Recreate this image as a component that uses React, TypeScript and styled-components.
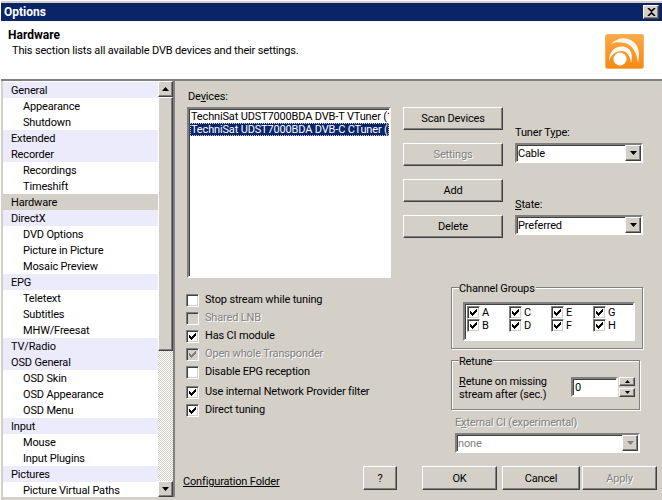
import React from "react";
import styled, { createGlobalStyle } from "styled-components";

const Global = createGlobalStyle`
  html, body { margin: 0; padding: 0; background: #d4d0c8; }
  * { box-sizing: border-box; }
  body { font-family: Roboto, "Liberation Sans", Arial, sans-serif; font-size: 11px; letter-spacing: -0.16px; color: #000; }
`;
const raised = `border: 1px solid; border-color: #fff #404040 #404040 #fff; box-shadow: inset -1px -1px 0 #808080;`;
const sunken = `border: 2px solid; border-color: #808080 #fff #fff #808080; box-shadow: inset 1px 1px 0 #404040;`;

const Window = styled.div`
  width: 662px; height: 500px; overflow: hidden; background: #d4d0c8;
  padding-top: 3px; display: flex; flex-direction: column; border-left: 1px solid #fff; border-top: 1px solid #fff;
`;
const TitleBar = styled.div`
  height: 18px; margin-top: -1px; background: #0a246a; color: #fff; font-weight: 700; font-size: 12px; letter-spacing: 0;
  display: flex; align-items: center; justify-content: space-between; padding: 0 3px 0 3px;
`;
const CloseBtn = styled.div`
  width: 16px; height: 14px; background: #d4d0c8; ${raised} display: flex; align-items: center; justify-content: center;
`;
const Header = styled.div`
  height: 60px; background: #fff; border-bottom: 2px solid #808080; display: flex; justify-content: space-between; padding: 7px 18px 0 7px;
`;
const HeaderText = styled.div`
  display: flex; flex-direction: column; gap: 1px;
`;
const HeaderTitle = styled.div`font-weight: 700; font-size: 12px; letter-spacing: 0; line-height: 15px;`;
const HeaderSub = styled.div`padding-left: 4px; line-height: 14px;`;
const Logo = styled.svg`width: 39px; height: 35px; margin-top: 6px;`;
const Body = styled.div`flex: 1; display: flex; min-height: 0;`;
const Side = styled.div`
  width: 172px; margin-left: 2px; display: flex; background: #fff; border-right: 2px solid #808080; height: 416px; margin-bottom: 2px; flex: none;
`;
const Tree = styled.div`flex: 1; padding-top: 1px; overflow: hidden;`;
const TreeRow = styled.div<{ $top?: boolean; $sel?: boolean }>`
  height: 16px; line-height: 18px; white-space: nowrap;
  padding-left: ${(p) => (p.$top ? 8 : 20)}px;
  background: ${(p) => (p.$sel ? "#d4d0c8" : p.$top ? "#ecebfb" : "#fff")};
`;
const Scroll = styled.div`
  width: 15px; flex: none; display: flex; flex-direction: column;
  background-color: #fff;
  background-image: conic-gradient(#d4d0c8 25%, #fff 0 50%, #d4d0c8 0 75%, #fff 0);
  background-size: 2px 2px;
`;
const ScrollBtn = styled.div`
  height: 16px; background: #d4d0c8; ${raised} display: flex; align-items: center; justify-content: center; flex: none;
`;
const Thumb = styled.div`height: 254px; background: #d4d0c8; ${raised} flex: none;`;
const ScrollGap = styled.div`flex: 1;`;
const Panel = styled.div`
  flex: 1; display: flex; flex-direction: column; padding: 9px 5px 0 12px; min-width: 0;
`;
const TopRow = styled.div`display: flex; height: 190px;`;
const DevCol = styled.div`width: 204px; display: flex; flex-direction: column; margin-right: 12px;`;
const Label = styled.div<{ $off?: boolean }>`
  line-height: 14px; white-space: nowrap;
  color: ${(p) => (p.$off ? "#808080" : "#000")};
  text-shadow: ${(p) => (p.$off ? "1px 1px 0 #fff" : "none")};
  u { text-decoration: underline; }
`;
const DevicesLabel = styled(Label)`padding-left: 1px;`;
const DevList = styled.div`
  ${sunken} height: 171px; margin-top: 3px; background: #fff; padding: 1px 0 0 1px; overflow: hidden;
`;
const DevItem = styled.div<{ $sel?: boolean }>`
  height: 13px; line-height: 13px; white-space: nowrap; overflow: hidden; padding-left: 1px;
  background: ${(p) => (p.$sel ? "#0a246a" : "transparent")};
  color: ${(p) => (p.$sel ? "#fff" : "#000")};
  outline: ${(p) => (p.$sel ? "1px dotted #d4d0c8" : "none")};
  outline-offset: -1px;
`;
const BtnCol = styled.div`width: 100px; display: flex; flex-direction: column; gap: 13px; padding-top: 17px; margin-right: 12px;`;
const Btn = styled.div<{ $w?: number; $off?: boolean }>`
  height: 23px; width: ${(p) => (p.$w ? p.$w + "px" : "100%")}; ${raised} flex: none;
  display: flex; align-items: center; justify-content: center; background: #d4d0c8;
  color: ${(p) => (p.$off ? "#808080" : "#000")};
  text-shadow: ${(p) => (p.$off ? "1px 1px 0 #fff" : "none")};
`;
const ComboCol = styled.div`width: 128px; display: flex; flex-direction: column; padding-top: 36px;`;
const ComboGroup = styled.div`display: flex; flex-direction: column; gap: 3px; height: 72px;`;
const Combo = styled.div<{ $off?: boolean; $w?: number }>`
  ${sunken} height: 20px; background: #fff; display: flex; align-items: stretch; justify-content: space-between;
  width: ${(p) => (p.$w ? p.$w + "px" : "100%")};
  color: ${(p) => (p.$off ? "#808080" : "#000")};
  line-height: 18px; padding-left: 1px; flex: none;
`;
const ComboBtn = styled.div`
  width: 16px; background: #d4d0c8; ${raised} display: flex; align-items: center; justify-content: center;
`;
const MidRow = styled.div`display: flex; justify-content: space-between; margin-top: 0;`;
const Checks = styled.div`display: flex; flex-direction: column; padding: 11px 0 0 0; margin-left: -1px;`;
const CheckRow = styled.div<{ $gap?: number }>`
  height: 18px; margin-top: ${(p) => p.$gap ?? 0}px; display: flex; align-items: center; gap: 6px; white-space: nowrap;
`;
const Box = styled.div<{ $off?: boolean }>`
  width: 13px; height: 13px; flex: none; display: flex; align-items: center; justify-content: center;
  border: 1px solid; border-color: #808080 #fff #fff #808080; box-shadow: inset 1px 1px 0 #404040, inset -1px -1px 0 #d4d0c8;
  background: ${(p) => (p.$off ? "#d4d0c8" : "#fff")};
`;
const RightCol = styled.div`width: 192px; display: flex; flex-direction: column; padding-top: 7px; margin-right: 14px;`;
const Group = styled.div<{ $w: number; $h: number }>`
  position: relative; width: ${(p) => p.$w}px; height: ${(p) => p.$h}px; flex: none;
  border: 1px solid #808080; box-shadow: 1px 1px 0 #fff, inset 1px 1px 0 #fff;
`;
const Legend = styled.div`
  position: absolute; left: 7px; top: -6px; background: #d4d0c8; line-height: 13px; padding: 0 1px 0 0;
`;
const GroupGrid = styled.div`
  ${sunken} margin: 14px 7px 0 11px; height: 39px; background: #fff; display: grid;
  grid-template-columns: 42px 42px 42px 42px; grid-auto-rows: 13px; padding: 2px 0 0 2px; row-gap: 0;
`;
const MiniCheck = styled.div`display: flex; align-items: center; gap: 2px; height: 13px;`;
const RetuneSpacer = styled.div`height: 11px; flex: none;`;
const RetuneRow = styled.div`display: flex; padding: 14px 4px 0 7px; justify-content: space-between;`;
const RetuneText = styled.div`line-height: 13px;`;
const SpinWrap = styled.div`display: flex; gap: 1px; margin-top: 2px; align-items: flex-start;`;
const SpinInput = styled.div`${sunken} width: 47px; height: 20px; background: #fff; line-height: 18px; padding-left: 2px;`;
const SpinBtns = styled.div`display: flex; flex-direction: column; gap: 2px;`;
const SpinBtn = styled.div`
  width: 16px; height: 9px; background: #d4d0c8; ${raised} display: flex; align-items: center; justify-content: center;
  svg { width: 5px; height: 3px; }
`;
const ExtWrap = styled.div`display: flex; flex-direction: column; gap: 3px; margin: 6px 0 0 4px;`;
const Footer = styled.div`display: flex; align-items: flex-end; height: 37px;`;
const Link = styled.div`
  margin-left: -4px; width: 180px; text-decoration: underline; line-height: 14px; padding-bottom: 1px; white-space: nowrap;
`;
const HelpSlot = styled.div`margin-right: 25px;`;
const FooterBtns = styled.div`display: flex;`;
const FootBtn = styled(Btn)<{ $ml?: number }>`height: 24px; margin-left: ${(p) => p.$ml ?? 0}px;`;

const Tri = ({ up, c = "#000" }: { up?: boolean; c?: string }) => (
  <svg width="7" height="4" viewBox="0 0 7 4">
    <path d={up ? "M3.5 0L7 4H0Z" : "M0 0H7L3.5 4Z"} fill={c} />
  </svg>
);
const Tick = ({ c = "#000" }: { c?: string }) => (
  <svg width="7" height="7" viewBox="0 0 7 7" shapeRendering="crispEdges">
    <path d="M0 2H1V3H2V4H3V3H4V2H5V1H6V0H7V3H6V4H5V5H4V6H3V7H2V6H1V5H0Z" fill={c} />
  </svg>
);

const tree: [string, boolean?, boolean?][] = [
  ["General", true], ["Appearance"], ["Shutdown"], ["Extended", true], ["Recorder", true], ["Recordings"], ["Timeshift"],
  ["Hardware", true, true], ["DirectX", true], ["DVD Options"], ["Picture in Picture"], ["Mosaic Preview"], ["EPG", true],
  ["Teletext"], ["Subtitles"], ["MHW/Freesat"], ["TV/Radio", true], ["OSD General", true], ["OSD Skin"], ["OSD Appearance"],
  ["OSD Menu"], ["Input", true], ["Mouse"], ["Input Plugins"], ["Pictures", true], ["Picture Virtual Paths"],
];
const checks: { t: string; on?: boolean; off?: boolean; gap?: number }[] = [
  { t: "Stop stream while tuning" }, { t: "Shared LNB", off: true }, { t: "Has CI module", on: true },
  { t: "Open whole Transponder", on: true, off: true }, { t: "Disable EPG reception" },
  { t: "Use internal Network Provider filter", on: true, gap: 2 }, { t: "Direct tuning", on: true },
];

export default function App() {
  return (
    <Window>
      <Global />
      <TitleBar>
        <span>Options</span>
        <CloseBtn>
          <svg width="9" height="8" viewBox="0 0 9 8"><path d="M1 0L4.5 3.2L8 0M1 8L4.5 4.8L8 8" stroke="#000" strokeWidth="1.6" fill="none" /></svg>
        </CloseBtn>
      </TitleBar>
      <Header>
        <HeaderText>
          <HeaderTitle>Hardware</HeaderTitle>
          <HeaderSub>This section lists all available DVB devices and their settings.</HeaderSub>
        </HeaderText>
        <Logo viewBox="0 0 39 35">
          <defs>
            <linearGradient id="lg" x1="0" y1="0" x2="0" y2="1">
              <stop offset="0" stopColor="#f9a94a" />
              <stop offset="1" stopColor="#f68a12" />
            </linearGradient>
          </defs>
          <rect x="0.5" y="0.5" width="38" height="34" rx="2" fill="url(#lg)" stroke="#f9b15c" />
          <circle cx="15" cy="25" r="6.5" fill="#fff" />
          <path d="M4 27C4 16 12 11 20 13C27 15 28 22 26 29C25 22 22 17 17 17C10 17 6 21 4 27Z" fill="#fff" fillOpacity=".95" />
          <path d="M6 10C14 1 27 3 32 12C35 18 34 24 33 29C32 20 28 11 20 9C14 8 10 8 6 10Z" fill="#fff" fillOpacity=".9" />
        </Logo>
      </Header>
      <Body>
        <Side>
          <Tree>
            {tree.map(([t, top, sel]) => (
              <TreeRow key={t} $top={top} $sel={sel}>{t}</TreeRow>
            ))}
          </Tree>
          <Scroll>
            <ScrollBtn><Tri up /></ScrollBtn>
            <Thumb />
            <ScrollGap />
            <ScrollBtn><Tri /></ScrollBtn>
          </Scroll>
        </Side>
        <Panel>
          <TopRow>
            <DevCol>
              <DevicesLabel>De<u>v</u>ices:</DevicesLabel>
              <DevList>
                <DevItem>TechniSat UDST7000BDA DVB-T VTuner (1</DevItem>
                <DevItem $sel>TechniSat UDST7000BDA DVB-C CTuner (</DevItem>
              </DevList>
            </DevCol>
            <BtnCol>
              <Btn>Scan Devices</Btn>
              <Btn $off>Settings</Btn>
              <Btn>Add</Btn>
              <Btn>Delete</Btn>
            </BtnCol>
            <ComboCol>
              <ComboGroup>
                <Label>Tuner T<u>y</u>pe:</Label>
                <Combo>Cable<ComboBtn><Tri /></ComboBtn></Combo>
              </ComboGroup>
              <ComboGroup>
                <Label><u>S</u>tate:</Label>
                <Combo>Preferred<ComboBtn><Tri /></ComboBtn></Combo>
              </ComboGroup>
            </ComboCol>
          </TopRow>
          <MidRow>
            <Checks>
              {checks.map((c) => (
                <CheckRow key={c.t} $gap={c.gap}>
                  <Box $off={c.off}>{c.on && <Tick c={c.off ? "#808080" : "#000"} />}</Box>
                  <Label $off={c.off}>{c.t}</Label>
                </CheckRow>
              ))}
            </Checks>
            <RightCol>
              <Group $w={192} $h={62}>
                <Legend>Channel Groups</Legend>
                <GroupGrid>
                  {["A", "C", "E", "G", "B", "D", "F", "H"].map((l) => (
                    <MiniCheck key={l}><Box><Tick /></Box>{l}</MiniCheck>
                  ))}
                </GroupGrid>
              </Group>
              <RetuneSpacer />
              <Group $w={189} $h={50}>
                <Legend>Retune</Legend>
                <RetuneRow>
                  <RetuneText><u>R</u>etune on missing<br />stream after (sec.)</RetuneText>
                  <SpinWrap>
                    <SpinInput>0</SpinInput>
                    <SpinBtns>
                      <SpinBtn><Tri up /></SpinBtn>
                      <SpinBtn><Tri /></SpinBtn>
                    </SpinBtns>
                  </SpinWrap>
                </RetuneRow>
              </Group>
              <ExtWrap>
                <Label $off>E<u>x</u>ternal CI (experimental)</Label>
                <Combo $off $w={185}>none<ComboBtn><Tri c="#808080" /></ComboBtn></Combo>
              </ExtWrap>
            </RightCol>
          </MidRow>
          <Footer>
            <Link>Configuration Folder</Link>
            <HelpSlot><FootBtn $w={34}>?</FootBtn></HelpSlot>
            <FooterBtns>
              <FootBtn $w={75}>OK</FootBtn>
              <FootBtn $w={78} $ml={5}>Cancel</FootBtn>
              <FootBtn $w={75} $ml={2} $off>Apply</FootBtn>
            </FooterBtns>
          </Footer>
        </Panel>
      </Body>
    </Window>
  );
}
